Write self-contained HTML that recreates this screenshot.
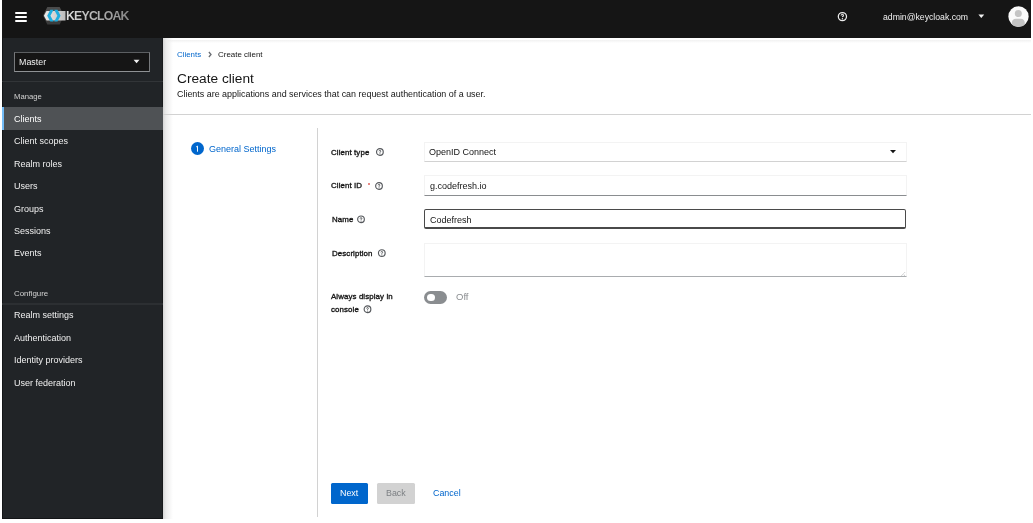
<!DOCTYPE html><html><head><meta charset="utf-8"><style>
html,body{margin:0;padding:0;background:#fff;width:1033px;height:523px;overflow:hidden;position:relative}
body{font-family:"Liberation Sans",sans-serif}
.t{position:absolute;line-height:1;white-space:nowrap;will-change:transform}
#hdr{position:absolute;left:2px;top:0;width:1029px;height:38px;background:#151515;border-right:0}
#side{position:absolute;left:2px;top:38px;width:161px;height:481px;background:#212427;box-shadow:inset 1px 0 0 #131517, inset 0 -1px 0 #131517, inset -1px 0 0 #181a1c}
#main{position:absolute;left:163px;top:38px;width:868px;height:481px;background:#fff}
#mshadow{position:absolute;left:163px;top:38px;width:11px;height:481px;background:linear-gradient(90deg,#d5d5d5 0px,#e6e6e6 2px,#ededed 3.5px,rgba(255,255,255,0) 10px)}
.inp{position:absolute;left:424px;width:481px;border:1px solid #f3f3f3;border-bottom-color:#8a8d90;background:#fff}
</style></head><body>
<div id="hdr"></div>
<div style="position:absolute;left:15px;top:12px;width:12px;height:2px;background:#fff;border-radius:1px"></div>
<div style="position:absolute;left:15px;top:16px;width:12px;height:2px;background:#fff;border-radius:1px"></div>
<div style="position:absolute;left:15px;top:20px;width:12px;height:2px;background:#fff;border-radius:1px"></div>
<svg style="position:absolute;left:40px;top:4px" width="28" height="24" viewBox="0 0 28 24">
<defs><linearGradient id="bar" x1="0" x2="1" y1="0" y2="0"><stop offset="0" stop-color="#ececec"/><stop offset="1" stop-color="#bcbcbc"/></linearGradient></defs>
<polygon points="7.3,3 19.7,3 24,11.8 3,11.8" fill="#4b4b4b"/>
<polygon points="3,11.8 24,11.8 19.7,20.6 7.3,20.6" fill="#3b3b3b"/>
<polygon points="3.9,11.7 6.5,6.9 25.5,6.9 25.5,16.5 6.5,16.5" fill="url(#bar)"/>
<polygon points="10.3,5.8 13.6,5.8 10.4,11.7 13.6,17.6 10.3,17.6 7.2,11.7" fill="#1eaddf"/>
<polygon points="17.5,5.8 14.2,5.8 17.4,11.7 14.2,17.6 17.5,17.6 20.6,11.7" fill="#1eaddf"/>
</svg>
<div class="t" style="left:66.00px;top:10px;font-size:12.3px;color:#c8c8c8;font-weight:bold;letter-spacing:-0.8px;background:linear-gradient(90deg,#dedede,#868686);-webkit-background-clip:text;background-clip:text;-webkit-text-fill-color:transparent;">KEYCLOAK</div>
<svg style="position:absolute;left:837px;top:11px" width="11" height="11" viewBox="0 0 11 11">
<circle cx="5.4" cy="5.6" r="4.1" fill="none" stroke="#ececec" stroke-width="1.25"/>
<path d="M4.3 4.6 Q4.2 3.5 5.3 3.4 Q6.5 3.4 6.5 4.5 Q6.5 5.2 5.5 5.6 L5.4 6.1" fill="none" stroke="#d8d8d8" stroke-width="1.15"/>
<circle cx="5.4" cy="7.8" r="0.7" fill="#ececec"/>
</svg>
<div class="t" style="left:882.90px;top:13px;font-size:8.7px;color:#f0f0f0;font-weight:normal;">admin@keycloak.com</div>
<svg style="position:absolute;left:978px;top:14px" width="8" height="6"><polygon points="0.40,0.60 6.20,0.60 3.30,4.10" fill="#f0f0f0"/></svg>
<svg style="position:absolute;left:1008px;top:6.3px" width="21" height="21" viewBox="0 0 21 21">
<defs><clipPath id="av"><circle cx="10.5" cy="10.5" r="10.5"/></clipPath></defs>
<circle cx="10.5" cy="10.5" r="10.15" fill="#fafafa"/>
<g clip-path="url(#av)"><circle cx="10.3" cy="7.6" r="3.5" fill="#c4c4c4"/>
<path d="M3.8 17 Q4 13 7.8 12.8 L12.8 12.8 Q16.6 13 16.8 17 L16.8 21 L3.8 21 Z" fill="#c4c4c4"/></g>
</svg>
<div id="side"></div>
<div style="position:absolute;left:14px;top:52px;width:134px;height:18px;background:#151515;border:1px solid #77797c;border-top-color:#5c5f62;border-bottom-color:#8f9295"></div>
<div class="t" style="left:18.60px;top:58px;font-size:8.9px;color:#f0f0f0;font-weight:normal;">Master</div>
<svg style="position:absolute;left:133px;top:59px" width="8" height="6"><polygon points="0.60,0.80 6.50,0.80 3.55,4.30" fill="#f0f0f0"/></svg>
<div style="position:absolute;left:2px;top:81px;width:161px;height:1px;background:#323538"></div>
<div class="t" style="left:14.00px;top:93px;font-size:7.7px;color:#d2d2d2;font-weight:normal;">Manage</div>
<div style="position:absolute;left:2px;top:107px;width:161px;height:23px;background:#4f5255"></div>
<div style="position:absolute;left:2px;top:107px;width:1.5px;height:23px;background:#73bcf7"></div>
<div class="t" style="left:14.00px;top:115px;font-size:9px;color:#fff;font-weight:normal;">Clients</div>
<div class="t" style="left:14.00px;top:137px;font-size:9px;color:#f0f0f0;font-weight:normal;">Client scopes</div>
<div class="t" style="left:14.00px;top:160px;font-size:9px;color:#f0f0f0;font-weight:normal;">Realm roles</div>
<div class="t" style="left:14.00px;top:182px;font-size:9px;color:#f0f0f0;font-weight:normal;">Users</div>
<div class="t" style="left:14.00px;top:205px;font-size:9px;color:#f0f0f0;font-weight:normal;">Groups</div>
<div class="t" style="left:14.00px;top:227px;font-size:9px;color:#f0f0f0;font-weight:normal;">Sessions</div>
<div class="t" style="left:14.00px;top:249px;font-size:9px;color:#f0f0f0;font-weight:normal;">Events</div>
<div class="t" style="left:14.20px;top:290px;font-size:7.9px;color:#d2d2d2;font-weight:normal;">Configure</div>
<div style="position:absolute;left:2px;top:303px;width:161px;height:2px;background:#2c2f32"></div>
<div class="t" style="left:14.00px;top:311px;font-size:9px;color:#f0f0f0;font-weight:normal;">Realm settings</div>
<div class="t" style="left:14.00px;top:334px;font-size:9px;color:#f0f0f0;font-weight:normal;">Authentication</div>
<div class="t" style="left:14.00px;top:356px;font-size:9px;color:#f0f0f0;font-weight:normal;">Identity providers</div>
<div class="t" style="left:14.00px;top:379px;font-size:9px;color:#f0f0f0;font-weight:normal;">User federation</div>
<div id="main"></div>
<div style="position:absolute;left:163px;top:38px;width:868px;height:5px;background:linear-gradient(180deg,#fff 0px,#fff 1.5px,#f2f2f2 2.2px,rgba(255,255,255,0) 5px)"></div>
<div id="mshadow"></div>
<div class="t" style="left:177.40px;top:51px;font-size:7.9px;color:#0066cc;font-weight:normal;">Clients</div>
<svg style="position:absolute;left:207.5px;top:51px" width="4" height="7" viewBox="0 0 4 7"><polyline points="0.9,1 3,3.5 0.9,6" fill="none" stroke="#6a6e73" stroke-width="1.3"/></svg>
<div class="t" style="left:218.40px;top:51px;font-size:7.95px;color:#151515;font-weight:normal;">Create client</div>
<div class="t" style="left:177.40px;top:72px;font-size:13.7px;color:#151515;font-weight:normal;">Create client</div>
<div class="t" style="left:177.40px;top:90px;font-size:8.94px;color:#151515;font-weight:normal;">Clients are applications and services that can request authentication of a user.</div>
<div style="position:absolute;left:163px;top:114px;width:868px;height:1px;background:#d2d2d2"></div>
<div style="position:absolute;left:190.5px;top:141.7px;width:13.5px;height:13.5px;border-radius:50%;background:#0066cc"></div>
<svg style="position:absolute;left:194px;top:145px" width="6" height="8" viewBox="0 0 6 8"><path d="M2.2 1.9 L3.5 1.1 L3.5 6.7" fill="none" stroke="#fff" stroke-width="0.95"/></svg>
<div class="t" style="left:208.70px;top:145px;font-size:9px;color:#0066cc;font-weight:normal;">General Settings</div>
<div style="position:absolute;left:317px;top:128px;width:1px;height:389px;background:#d2d2d2"></div>
<div class="t" style="left:331.30px;top:149px;font-size:7.9px;color:#151515;font-weight:normal;-webkit-text-stroke:0.34px #151515;letter-spacing:0.1px;">Client type</div>
<svg style="position:absolute;left:374px;top:147px" width="10" height="10" viewBox="0 0 10 10"><g transform="translate(1.40,0.50)">
<circle cx="4.5" cy="4.5" r="3.35" fill="none" stroke="#55585c" stroke-width="1.15"/>
<path d="M3.65 3.8 Q3.65 2.85 4.5 2.85 Q5.35 2.85 5.35 3.7 Q5.35 4.2 4.6 4.6 L4.55 5.25" fill="none" stroke="#55585c" stroke-width="0.95"/>
<circle cx="4.55" cy="6.3" r="0.55" fill="#55585c"/>
</g></svg>
<div class="t" style="left:331.30px;top:182px;font-size:7.9px;color:#151515;font-weight:normal;-webkit-text-stroke:0.34px #151515;letter-spacing:0.1px;">Client ID</div>
<div style="position:absolute;left:367.5px;top:183.2px;width:2.2px;height:2.2px;border-radius:50%;background:#e0625b"></div>
<svg style="position:absolute;left:374px;top:181px" width="10" height="10" viewBox="0 0 10 10"><g transform="translate(0.50,0.50)">
<circle cx="4.5" cy="4.5" r="3.35" fill="none" stroke="#55585c" stroke-width="1.15"/>
<path d="M3.65 3.8 Q3.65 2.85 4.5 2.85 Q5.35 2.85 5.35 3.7 Q5.35 4.2 4.6 4.6 L4.55 5.25" fill="none" stroke="#55585c" stroke-width="0.95"/>
<circle cx="4.55" cy="6.3" r="0.55" fill="#55585c"/>
</g></svg>
<div class="t" style="left:331.70px;top:216px;font-size:7.9px;color:#151515;font-weight:normal;-webkit-text-stroke:0.34px #151515;letter-spacing:0.1px;">Name</div>
<svg style="position:absolute;left:356px;top:214px" width="10" height="10" viewBox="0 0 10 10"><g transform="translate(0.50,0.80)">
<circle cx="4.5" cy="4.5" r="3.35" fill="none" stroke="#55585c" stroke-width="1.15"/>
<path d="M3.65 3.8 Q3.65 2.85 4.5 2.85 Q5.35 2.85 5.35 3.7 Q5.35 4.2 4.6 4.6 L4.55 5.25" fill="none" stroke="#55585c" stroke-width="0.95"/>
<circle cx="4.55" cy="6.3" r="0.55" fill="#55585c"/>
</g></svg>
<div class="t" style="left:331.70px;top:250px;font-size:7.9px;color:#151515;font-weight:normal;-webkit-text-stroke:0.34px #151515;letter-spacing:0.1px;">Description</div>
<svg style="position:absolute;left:376px;top:248px" width="10" height="10" viewBox="0 0 10 10"><g transform="translate(1.30,0.60)">
<circle cx="4.5" cy="4.5" r="3.35" fill="none" stroke="#55585c" stroke-width="1.15"/>
<path d="M3.65 3.8 Q3.65 2.85 4.5 2.85 Q5.35 2.85 5.35 3.7 Q5.35 4.2 4.6 4.6 L4.55 5.25" fill="none" stroke="#55585c" stroke-width="0.95"/>
<circle cx="4.55" cy="6.3" r="0.55" fill="#55585c"/>
</g></svg>
<div class="t" style="left:331.20px;top:293px;font-size:7.9px;color:#151515;font-weight:normal;-webkit-text-stroke:0.34px #151515;letter-spacing:0.1px;">Always display in</div>
<div class="t" style="left:331.20px;top:306px;font-size:7.9px;color:#151515;font-weight:normal;-webkit-text-stroke:0.34px #151515;letter-spacing:0.1px;">console</div>
<svg style="position:absolute;left:362px;top:304px" width="10" height="10" viewBox="0 0 10 10"><g transform="translate(1.00,0.70)">
<circle cx="4.5" cy="4.5" r="3.35" fill="none" stroke="#55585c" stroke-width="1.15"/>
<path d="M3.65 3.8 Q3.65 2.85 4.5 2.85 Q5.35 2.85 5.35 3.7 Q5.35 4.2 4.6 4.6 L4.55 5.25" fill="none" stroke="#55585c" stroke-width="0.95"/>
<circle cx="4.55" cy="6.3" r="0.55" fill="#55585c"/>
</g></svg>
<div class="inp" style="top:142px;height:18px;border-bottom-color:#d2d2d2"></div>
<div class="t" style="left:428.80px;top:148px;font-size:9px;color:#151515;font-weight:normal;">OpenID Connect</div>
<svg style="position:absolute;left:890px;top:150px" width="8" height="6"><polygon points="0.00,0.00 6.00,0.00 3.00,3.20" fill="#151515"/></svg>
<div class="inp" style="top:175px;height:19px"></div>
<div class="t" style="left:429.50px;top:182px;font-size:9px;color:#151515;font-weight:normal;">g.codefresh.io</div>
<div style="position:absolute;left:424px;top:209px;width:480px;height:17px;border:1px solid #4a4a4a;border-width:1px 1.5px 2px 1.5px;border-radius:2px"></div>
<div class="t" style="left:429.80px;top:216px;font-size:9px;color:#151515;font-weight:normal;">Codefresh</div>
<div class="inp" style="top:243px;height:32px;border-bottom-color:#a9acaf"></div>
<svg style="position:absolute;left:900px;top:271px" width="6" height="6" viewBox="0 0 6 6"><path d="M5 1.2 L1.2 5 M5 3.8 L3.8 5" stroke="#8f9295" stroke-width="0.7" stroke-dasharray="0.8 0.5"/></svg>
<div style="position:absolute;left:424px;top:291px;width:23px;height:13px;border-radius:6.5px;background:#8a8d90"></div>
<div style="position:absolute;left:427px;top:293.5px;width:7.8px;height:7.8px;border-radius:50%;background:#fff"></div>
<div class="t" style="left:455.90px;top:292px;font-size:9.5px;color:#8a8d90;font-weight:normal;">Off</div>
<div style="position:absolute;left:331px;top:483.4px;width:37px;height:20.2px;border-radius:1.5px;background:#0066cc"></div>
<div class="t" style="left:340.30px;top:489px;font-size:8.9px;color:#fff;font-weight:normal;">Next</div>
<div style="position:absolute;left:377px;top:483.4px;width:37.8px;height:20.2px;border-radius:1.5px;background:#d2d2d2"></div>
<div class="t" style="left:386.30px;top:489px;font-size:8.9px;color:#7d8084;font-weight:normal;">Back</div>
<div class="t" style="left:433.00px;top:489px;font-size:8.9px;color:#0066cc;font-weight:normal;">Cancel</div>
</body></html>
